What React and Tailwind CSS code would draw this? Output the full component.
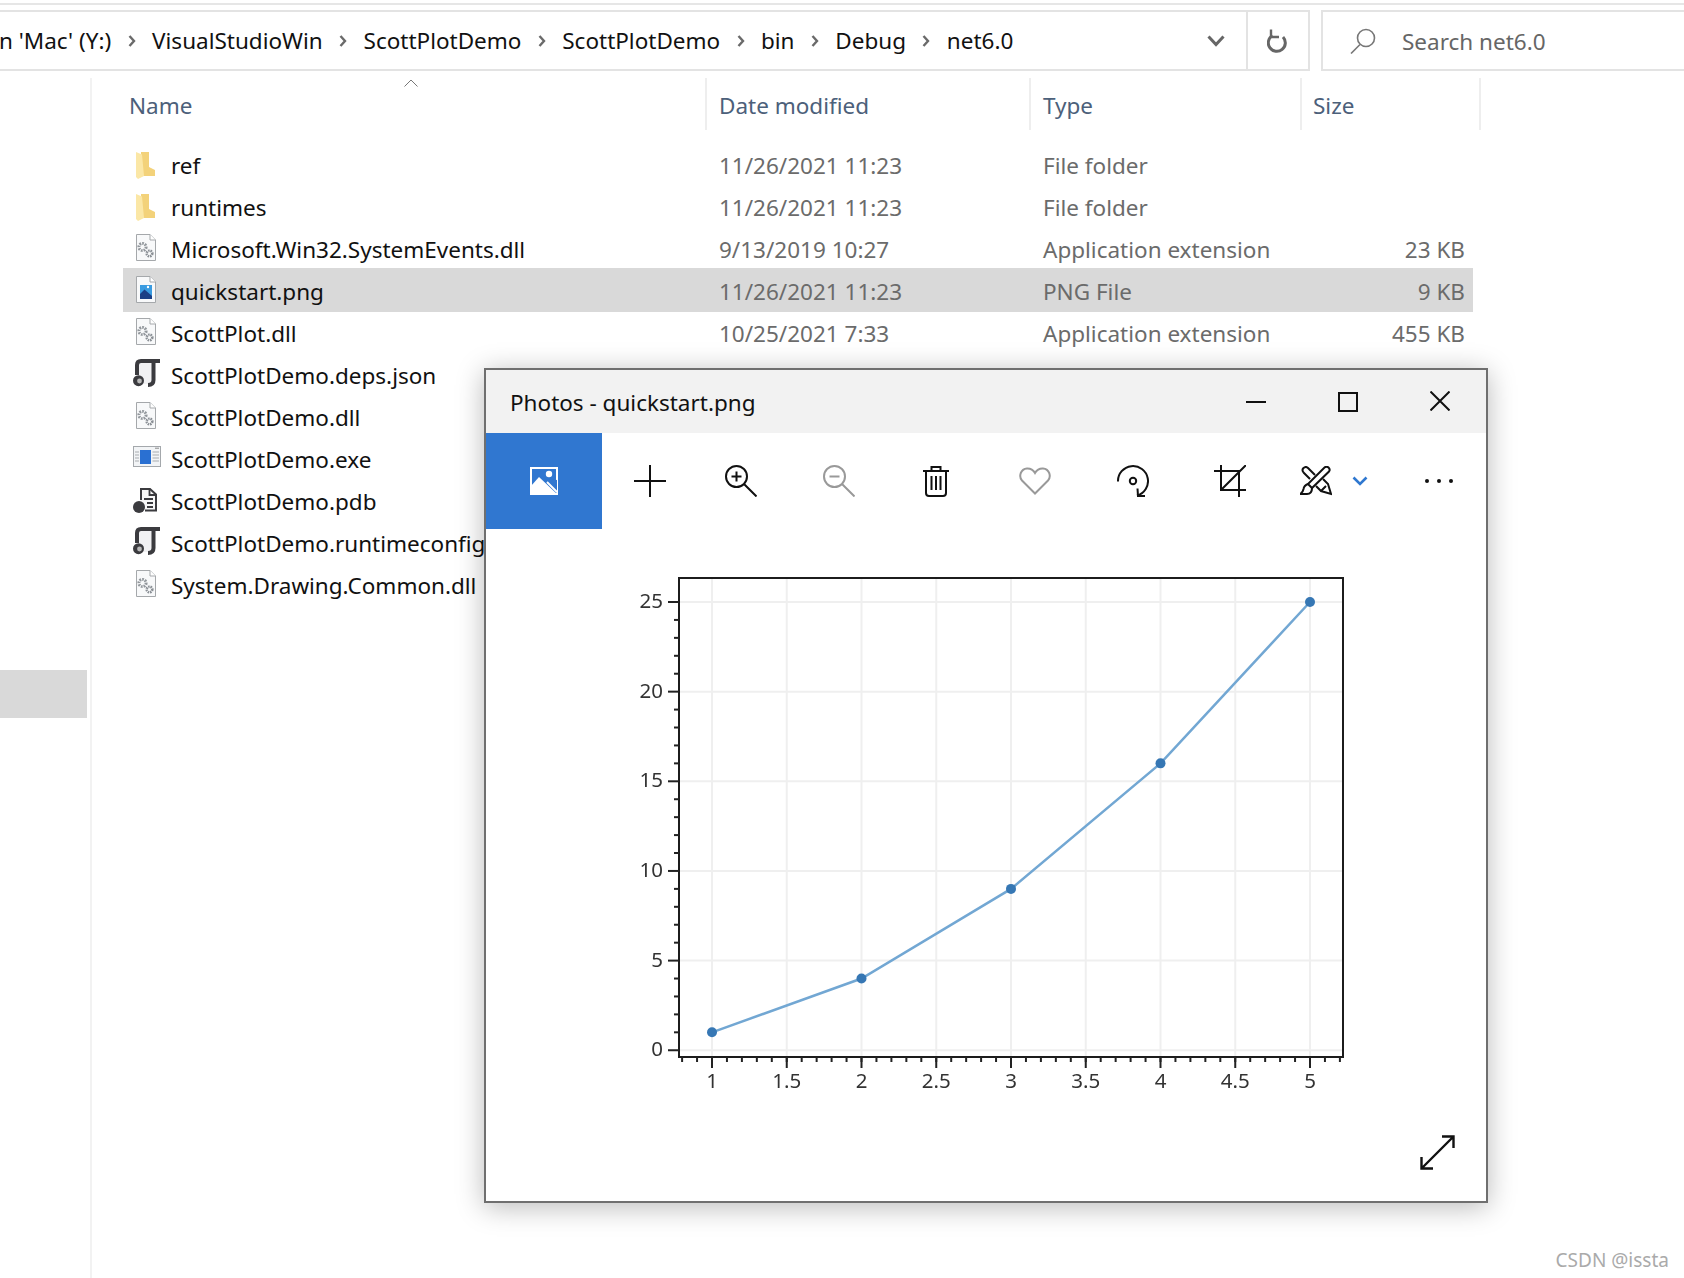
import React from "react";

const files = [
  { name: "ref", date: "11/26/2021 11:23", type: "File folder", size: "", icon: "folder" },
  { name: "runtimes", date: "11/26/2021 11:23", type: "File folder", size: "", icon: "folder" },
  { name: "Microsoft.Win32.SystemEvents.dll", date: "9/13/2019 10:27", type: "Application extension", size: "23 KB", icon: "dll" },
  { name: "quickstart.png", date: "11/26/2021 11:23", type: "PNG File", size: "9 KB", icon: "png", selected: true },
  { name: "ScottPlot.dll", date: "10/25/2021 7:33", type: "Application extension", size: "455 KB", icon: "dll" },
  { name: "ScottPlotDemo.deps.json", date: "11/26/2021 11:44", type: "JSON File", size: "4 KB", icon: "json" },
  { name: "ScottPlotDemo.dll", date: "", type: "", size: "", icon: "dll" },
  { name: "ScottPlotDemo.exe", date: "", type: "", size: "", icon: "exe" },
  { name: "ScottPlotDemo.pdb", date: "", type: "", size: "", icon: "pdb" },
  { name: "ScottPlotDemo.runtimeconfig.json", date: "", type: "", size: "", icon: "json" },
  { name: "System.Drawing.Common.dll", date: "", type: "", size: "", icon: "dll" },
];

const crumbs = ["n 'Mac' (Y:)", "VisualStudioWin", "ScottPlotDemo", "ScottPlotDemo", "bin", "Debug", "net6.0"];

function DocShape({ children }) {
  return (
    <>
      <path d="M6.5 0.5H20L25.5 6V26.5H6.5Z" fill="#f8f9fa" stroke="#a5a8ab" />
      <path d="M20 0.5V6H25.5" fill="#fff" stroke="#a5a8ab" />
      {children}
    </>
  );
}

function FileIcon({ kind }) {
  return (
    <svg viewBox="0 -2 32 36" className="w-[32px] h-[36px] shrink-0 overflow-visible">
      {kind === "folder" && (
        <>
          <path d="M11 2H19V17L25 20V26H11Z" fill="#f3d27a" />
          <path d="M6 2L12 4.5L14 26L8 29L6 27Z" fill="#fbe7a6" />
        </>
      )}
      {kind === "dll" && (
        <DocShape>
          <circle cx="12.5" cy="13" r="3.6" fill="none" stroke="#92979c" strokeWidth="3" strokeDasharray="1.7 1" />
          <circle cx="19.5" cy="19.5" r="2.8" fill="none" stroke="#8a8f95" strokeWidth="2.6" strokeDasharray="1.5 0.8" />
        </DocShape>
      )}
      {kind === "png" && (
        <DocShape>
          <rect x="10" y="9" width="12" height="14" fill="#3a9be0" />
          <circle cx="18" cy="11" r="1.2" fill="#fff" />
          <path d="M10 23V18L14.5 13.5L22 20V23Z" fill="#1b3f85" />
        </DocShape>
      )}
      {kind === "json" && (
        <>
          <path d="M8 15V5Q8 1 12 1H24V24H14Z" fill="#f1f1f3" />
          <path d="M7 15V5Q7 1 11 1H30" fill="none" stroke="#3b3b3f" strokeWidth="4" />
          <path d="M23.5 1V20Q23.5 25 18 25" fill="none" stroke="#3b3b3f" strokeWidth="4" />
          <circle cx="8.5" cy="20.7" r="5.5" fill="#3b3b3f" />
          <circle cx="9.5" cy="21" r="2.4" fill="#b9b9b9" />
        </>
      )}
      {kind === "exe" && (
        <>
          <rect x="3.5" y="2.5" width="27" height="20" fill="#f2f4f6" stroke="#a4a8ac" />
          <rect x="10" y="6" width="11" height="14" fill="#2a70d2" />
          <path d="M5 8H9M5 11H9M5 14H9M5 17H9M22.5 8H29M22.5 11H29M22.5 14H29M22.5 17H29" stroke="#a8acb0" strokeWidth="1" />
          <path d="M25 4.2H29" stroke="#888" strokeWidth="1" />
        </>
      )}
      {kind === "pdb" && (
        <>
          <path d="M11 14V3H20L26 8.5V24.5H15" fill="#f7f7f7" stroke="#3b3b3f" strokeWidth="2" />
          <path d="M19.5 3V9H26M14 13H23M17 17H23M17 21H23" fill="none" stroke="#3b3b3f" strokeWidth="1.8" />
          <circle cx="9" cy="21" r="6" fill="#3b3b3f" />
        </>
      )}
    </svg>
  );
}

function Chevron() {
  return (
    <svg viewBox="0 0 8 12" className="w-[8px] h-[12px] shrink-0">
      <path d="M1.5 1L6 6L1.5 11" fill="none" stroke="#6a6a6a" strokeWidth="2.4" />
    </svg>
  );
}

function ToolIcon({ children, w = 32, h = 32, className = "" }) {
  return (
    <svg viewBox={`0 0 ${w} ${h}`} style={{ width: w, height: h }} className={className} fill="none" stroke="currentColor" strokeWidth="2">
      {children}
    </svg>
  );
}

const tools = [
  {
    width: "w-[96px]",
    el: (
      <ToolIcon>
        <path d="M0 16H32M16 0V32" />
      </ToolIcon>
    ),
  },
  {
    width: "w-[86px]",
    el: (
      <ToolIcon>
        <circle cx="11.5" cy="11.5" r="10.5" />
        <path d="M19 19L31.5 31.5M6.5 11.5H16.5M11.5 6.5V16.5" />
      </ToolIcon>
    ),
  },
  {
    width: "w-[110px]",
    el: (
      <ToolIcon className="text-[#999]">
        <circle cx="11.5" cy="11.5" r="10.5" />
        <path d="M19 19L31.5 31.5M6.5 11.5H16.5" />
      </ToolIcon>
    ),
  },
  {
    width: "w-[84px]",
    el: (
      <ToolIcon w={26}>
        <path d="M0 6H26M8.5 6V2H17.5V6M3 6V28Q3 31 6 31H20Q23 31 23 28V6M8.5 11V25M13 11V25M17.5 11V25" />
      </ToolIcon>
    ),
  },
  {
    width: "w-[113px]",
    el: (
      <ToolIcon h={28} className="text-[#999]">
        <path d="M16 26.5L3 13.5C-0.5 9.5 1.5 2 8 1.5C11.5 1.3 14.5 3.5 16 6C17.5 3.5 20.5 1.3 24 1.5C30.5 2 32.5 9.5 29 13.5Z" />
      </ToolIcon>
    ),
  },
  {
    width: "w-[83px]",
    el: (
      <ToolIcon>
        <path d="M1 16.5A15 15 0 1 1 20 30.5" />
        <circle cx="16" cy="16" r="3.2" />
        <path d="M20.5 23.5L21 31H28" />
      </ToolIcon>
    ),
  },
  {
    width: "w-[112px]",
    el: (
      <ToolIcon>
        <path d="M0 6H25V25M7 0V25H32M25 32V25M7 25L32 0" />
      </ToolIcon>
    ),
  },
  {
    width: "w-[59px]",
    el: (
      <ToolIcon h={30}>
        <path d="M24.5 1.5Q26.5 0 28.5 1.5Q30.5 3.5 29 5.5L12 22L8 18Z" />
        <path d="M8 18Q4 19.5 3.5 23Q3 26 0.5 28H7Q12 28 12 22" />
        <path d="M3.5 6.5Q1.5 4 3.5 2Q6 0 8 2L15 9M3.5 6.5L10 13" />
        <path d="M23 13L28 18L31 28L21 25L16 20M21 25L26 20" />
      </ToolIcon>
    ),
  },
  {
    width: "w-[30px]",
    el: (
      <svg viewBox="0 0 16 10" className="w-[16px] h-[10px] shrink-0">
        <path d="M1.5 1.5L8 8L14.5 1.5" fill="none" stroke="#2f78d0" strokeWidth="2.6" />
      </svg>
    ),
  },
  {
    width: "w-[108px] pl-[20px]",
    el: (
      <svg viewBox="0 0 28 4" className="w-[28px] h-[4px]">
        <circle cx="2" cy="2" r="2" fill="#111" />
        <circle cx="14" cy="2" r="2" fill="#111" />
        <circle cx="26" cy="2" r="2" fill="#111" />
      </svg>
    ),
  },
];

function Chart() {
  const xs = [1, 2, 3, 4, 5];
  const xAt = (v) => 92 + (v - 1) * 149.5;
  const yAt = (v) => 42 + (25 - v) * 17.93;
  const yMinor = Array.from({ length: 26 }, (_, i) => i);
  const xMinor = Array.from({ length: 47 }, (_, i) => 0.8 + i * 0.1).filter((v) => xAt(v) > 60 && xAt(v) <= 722);
  const xMajor = [1, 1.5, 2, 2.5, 3, 3.5, 4, 4.5, 5];
  const line = xs.map((v) => `${xAt(v)},${yAt(v * v)}`).join(" ");
  return (
    <svg viewBox="0 0 740 550" className="w-[740px] h-[550px] font-['Noto_Sans',sans-serif] blur-[0.5px]">
      {xMajor.map((v) => (
        <path key={v} d={`M${xAt(v)} 18V497`} stroke="#efefef" strokeWidth="2" />
      ))}
      {[0, 5, 10, 15, 20, 25].map((v) => (
        <path key={v} d={`M59 ${yAt(v)}H723`} stroke="#efefef" strokeWidth="2" />
      ))}
      <polyline points={line} fill="none" stroke="#72a7d3" strokeWidth="2.5" />
      {xs.map((v) => (
        <circle key={v} cx={xAt(v)} cy={yAt(v * v)} r="5" fill="#3677b4" />
      ))}
      <rect x="59" y="18" width="664" height="479" fill="none" stroke="#1c1c1c" strokeWidth="2" />
      {yMinor.map((v) => (
        <path key={v} d={`M${v % 5 === 0 ? 48 : 54} ${yAt(v)}H59`} stroke="#222" strokeWidth="2" />
      ))}
      {xMinor.map((v, i) => (
        <path key={i} d={`M${xAt(v)} 497V502`} stroke="#222" strokeWidth="2" />
      ))}
      {xMajor.map((v) => (
        <path key={v} d={`M${xAt(v)} 497V508`} stroke="#222" strokeWidth="2" />
      ))}
      {[0, 5, 10, 15, 20, 25].map((v) => (
        <text key={v} x="43" y={yAt(v) + 6} textAnchor="end" fontSize="20.5" fill="#333">
          {v}
        </text>
      ))}
      {xMajor.map((v) => (
        <text key={v} x={xAt(v)} y="528" textAnchor="middle" fontSize="20.5" fill="#333">
          {v}
        </text>
      ))}
    </svg>
  );
}

function PhotosWindow() {
  return (
    <div className="absolute left-[484px] top-[368px] w-[1004px] h-[835px] flex flex-col bg-white border-2 border-[#6f6f6f] shadow-[0_4px_26px_rgba(0,0,0,0.28)] font-['Noto_Sans',sans-serif]">
      <div className="h-[63px] shrink-0 flex items-center bg-[#f2f2f2]">
        <div className="flex-1 pl-[24px] pt-[2px] text-[22.5px] text-[#111]">Photos - quickstart.png</div>
        <div className="w-[92px] flex justify-center">
          <div className="w-[20px] h-[2px] bg-[#111]"></div>
        </div>
        <div className="w-[92px] flex justify-center">
          <div className="w-[20px] h-[20px] border-2 border-[#111]"></div>
        </div>
        <div className="w-[92px] flex justify-center">
          <svg viewBox="0 0 20 20" className="w-[20px] h-[20px] -mt-[2px]">
            <path d="M0.5 0.5L19.5 19.5M19.5 0.5L0.5 19.5" stroke="#111" strokeWidth="2" />
          </svg>
        </div>
      </div>
      <div className="h-[96px] shrink-0 flex items-center text-[#111]">
        <div className="w-[116px] h-[96px] shrink-0 flex items-center justify-center bg-[#3077d0]">
          <svg viewBox="0 0 28 28" className="w-[28px] h-[28px]">
            <rect width="28" height="28" fill="#fff" />
            <rect x="2" y="2" width="24" height="24" fill="#3077d0" />
            <path d="M1 19L9 10L27 27H1Z" fill="#fff" />
            <path d="M14 14L27 26V13L21 12Z" fill="#3077d0" />
            <circle cx="19" cy="7" r="3.2" fill="#fff" />
            <path d="M17 15L27 25" stroke="#fff" strokeWidth="2" />
          </svg>
        </div>
        {tools.map((t, i) => (
          <div key={i} className={`${t.width} shrink-0 flex items-center justify-center`}>
            {t.el}
          </div>
        ))}
      </div>
      <div className="flex-1 relative pl-[134px] pt-[31px]">
        <Chart />
        <svg viewBox="0 0 35 35" className="absolute right-[31px] bottom-[31px] w-[35px] h-[35px] text-[#111]" fill="none" stroke="currentColor" strokeWidth="2.4">
          <path d="M1.5 33.5L33.5 1.5M22 1.5H33.5V13M1.5 22V33.5H13" />
        </svg>
      </div>
    </div>
  );
}

export default function App() {
  return (
    <div className="relative w-full h-[1278px] overflow-hidden bg-white font-['Noto_Sans',sans-serif]">
      <div className="h-[10px] pt-[3px]">
        <div className="h-[2px] bg-[#e6e6e6]"></div>
      </div>
      <div className="h-[61px] flex gap-[11px]">
        <div className="w-[1310px] shrink-0 flex items-center border-y-2 border-r-2 border-[#e3e3e3]">
          <div className="flex-1 flex items-center gap-[16.4px] text-[22.5px] text-[#111] overflow-hidden whitespace-nowrap">
            {crumbs.map((c, i) => (
              <React.Fragment key={i}>
                {i > 0 && <Chevron />}
                <span className={i === 0 ? "-ml-[1px]" : ""}>{c}</span>
              </React.Fragment>
            ))}
          </div>
          <div className="w-[60px] flex justify-center">
            <svg viewBox="0 0 18 12" className="w-[18px] h-[12px]">
              <path d="M1.5 1.5L9 9.5L16.5 1.5" fill="none" stroke="#666" strokeWidth="3" />
            </svg>
          </div>
          <div className="w-[62px] h-full flex items-center justify-center border-l-2 border-[#e3e3e3]">
            <svg viewBox="0 0 22 26" className="w-[22px] h-[26px]" fill="none" stroke="#666" strokeWidth="3">
              <path d="M16 9A8.5 8.5 0 1 1 5.5 7.5" />
              <path d="M4 1.5V9H12" strokeWidth="2.4" />
            </svg>
          </div>
        </div>
        <div className="flex-1 flex items-center border-y-2 border-l-2 border-[#e3e3e3] pl-[27px] gap-[26px] text-[22.5px] text-[#666]">
          <svg viewBox="0 0 26 26" className="w-[26px] h-[26px]" fill="none" stroke="#777" strokeWidth="1.6">
            <circle cx="16" cy="10" r="8.5" />
            <path d="M10 16.5L1 25.5" />
          </svg>
          <span className="pt-[2px]">Search net6.0</span>
        </div>
      </div>
      <div className="flex h-[1207px]">
        <div className="w-[92px] shrink-0 border-r-2 border-[#f2f2f2] mt-[7px] pt-[592px]">
          <div className="w-[87px] h-[48px] bg-[#d9d9d9]"></div>
        </div>
        <div className="flex-1 pl-[31px]">
          <div className="h-[59px] mt-[7px] flex text-[22.5px] text-[#4c607a] relative">
            <svg viewBox="0 0 14 8" className="absolute left-[281px] top-[1px] w-[14px] h-[8px]">
              <path d="M0.5 7.5L7 1L13.5 7.5" fill="none" stroke="#777" strokeWidth="1" />
            </svg>
            <div className="w-[584px] pl-[6px] pt-[11px] border-r-2 border-[#eeeeee] h-[52px]">Name</div>
            <div className="w-[324px] pl-[12px] pt-[11px] border-r-2 border-[#eeeeee] h-[52px]">Date modified</div>
            <div className="w-[271px] pl-[12px] pt-[11px] border-r-2 border-[#eeeeee] h-[52px]">Type</div>
            <div className="w-[179px] pl-[11px] pt-[11px] border-r-2 border-[#eeeeee] h-[52px]">Size</div>
          </div>
          <div className="w-[1350px] mt-[7px]">
            {files.map((f) => (
              <div
                key={f.name}
                className={`grid grid-cols-[596px_324px_1fr_120px] items-center text-[22.5px] ${f.selected ? "h-[44px] -mt-[2px] pt-[3px] bg-[#d9d9d9]" : "h-[42px] pt-[1px]"}`}
              >
                <div className="flex items-center pl-[7px] gap-[9px] text-[#111] whitespace-nowrap">
                  <FileIcon kind={f.icon} />
                  <span>{f.name}</span>
                </div>
                <div className="text-[#6b6b6b]">{f.date}</div>
                <div className="text-[#6b6b6b]">{f.type}</div>
                <div className="text-right pr-[8px] text-[#6b6b6b]">{f.size}</div>
              </div>
            ))}
          </div>
        </div>
      </div>
      <PhotosWindow />
      <div className="absolute right-[15px] bottom-[4px] text-[19px] text-[#aaaaaa]">CSDN @issta</div>
    </div>
  );
}
